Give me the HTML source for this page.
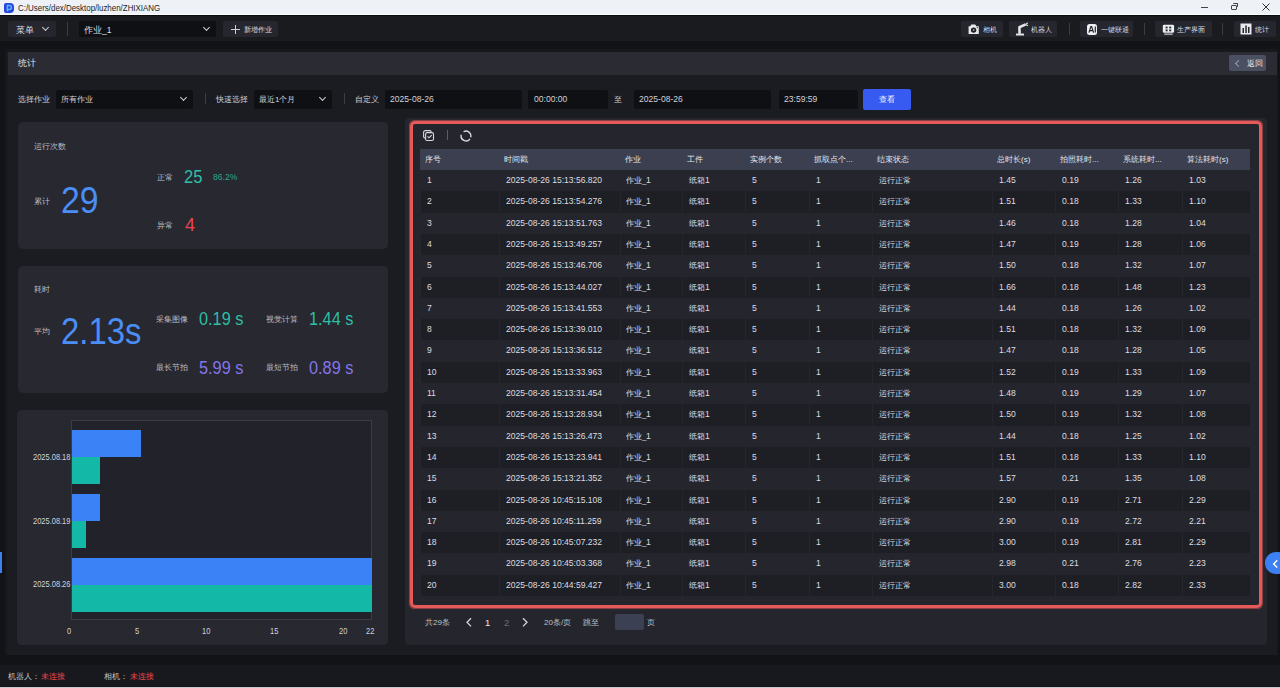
<!DOCTYPE html>
<html><head><meta charset="utf-8">
<style>
*{box-sizing:border-box;margin:0;padding:0}
html,body{width:1280px;height:688px;overflow:hidden;background:#121317;font-family:"Liberation Sans",sans-serif;color:#d9dade}

.a{position:absolute}
.nw{white-space:nowrap}
#title{left:0;top:0;width:1280px;height:15px;background:#eef1f5;border-bottom:1px solid #fafbfc}
#toolbar{left:0;top:15px;width:1280px;height:26px;background:#1a1b1f;border-top:1px solid #0c0c0e}
.tbtn{top:21px;height:16px;background:#25262e;border-radius:2px}
.tbt{font-size:7px;color:#dcdde2;line-height:16px;top:22px;white-space:nowrap}
.vsep{width:1px;background:#3c3d44}
.lbl{font-size:8px;color:#cfd0d5;white-space:nowrap;line-height:10px}
.inp{top:89.5px;height:19px;background:#0f1014;border-radius:2px}
.inpt{top:90px;font-size:8px;color:#d2d3d8;line-height:19px;white-space:nowrap}
.inpn{top:90px;font-size:9.3px;color:#d2d3d8;line-height:19px;white-space:nowrap;transform:scaleX(0.92);transform-origin:0 0}
.card{background:#272830;border-radius:5px}
.big{white-space:nowrap;line-height:1}
.th{background:#3b3f4f}
.tht{font-size:8px;color:#e4e5ea;line-height:21px;white-space:nowrap}
.ro{background:#25262d}
.re{background:#1e1f25}
.tdt{font-size:8px;color:#dddee2;line-height:21.3px;white-space:nowrap}
.dg{font-size:9.3px;display:inline-block;transform:scaleX(0.92);transform-origin:0 0}
.tdn{font-size:9.3px;color:#dddee2;line-height:21.3px;white-space:nowrap;transform:scaleX(0.92);transform-origin:0 0}
.chev{border-right:1.3px solid #cfd0d5;border-bottom:1.3px solid #cfd0d5;transform:rotate(45deg);width:5px;height:5px}
</style></head><body>
<!-- title bar -->
<div id="title" class="a">
  <div class="a" style="left:4px;top:2.5px;width:9.5px;height:10px;background:#2548dc;border-radius:2px 4px 4px 2px"></div>
  <svg class="a" style="left:4px;top:2.5px" width="10" height="10"><path d="M3.4 8.3V2.6h2.1a1.9 1.9 0 0 1 0 3.8H3.4" fill="none" stroke="#63b3f7" stroke-width="1.5"/></svg>
  <div class="a nw" style="left:18px;top:2px;font-size:9.4px;color:#1e1e1e;line-height:11px;transform:scaleX(0.845);transform-origin:0 0">C:/Users/dex/Desktop/luzhen/ZHIXIANG</div>
  <div class="a" style="left:1201px;top:7px;width:7px;height:1px;background:#444"></div>
  <div class="a" style="left:1231px;top:4.5px;width:6px;height:5px;border:1px solid #444;border-radius:1px"></div>
  <div class="a" style="left:1233px;top:3px;width:5px;height:4px;border-top:1px solid #444;border-right:1px solid #444;border-radius:1px"></div>
  <svg class="a" style="left:1261px;top:2px" width="10" height="10"><path d="M1.5 1.5L8.5 8.5M8.5 1.5L1.5 8.5" stroke="#333" stroke-width="1"/></svg>
</div>
<!-- toolbar -->
<div id="toolbar" class="a"></div>
<div class="a tbtn" style="left:8px;width:48px"></div>
<div class="a tbt" style="left:15.5px;font-size:8.5px">菜单</div>
<div class="a chev" style="left:43px;top:25px"></div>
<div class="a vsep" style="left:67px;top:22px;height:14px"></div>
<div class="a tbtn" style="left:79px;width:137px;background:#0f1014"></div>
<div class="a tbt" style="left:84px;font-size:8.5px">作业_1</div>
<div class="a chev" style="left:204px;top:25px"></div>
<div class="a tbtn" style="left:223px;width:55px"></div>
<div class="a" style="left:231px;top:28.5px;width:9px;height:1px;background:#cfd0d5"></div>
<div class="a" style="left:235px;top:24.5px;width:1px;height:9px;background:#cfd0d5"></div>
<div class="a tbt" style="left:244px;font-size:6.5px">新增作业</div>

<div class="a tbtn" style="left:961px;width:42px"></div>
<svg class="a" style="left:968px;top:24px" width="12" height="11"><path d="M0.6 2.2H2.3L3.3 0.4H7.3L8.2 2.2H10.8V9.9H0.6Z" fill="#e8e9ec"/><circle cx="5.6" cy="6.1" r="2.7" fill="#1c1d22"/><circle cx="5.6" cy="6.1" r="1" fill="#9a9ba0"/><circle cx="9.3" cy="3.6" r="0.6" fill="#1c1d22"/></svg>
<div class="a tbt" style="left:983px">相机</div>
<div class="a tbtn" style="left:1009px;width:48px"></div>
<svg class="a" style="left:1015px;top:22px" width="14" height="14"><rect x="1" y="11.6" width="8" height="1.9" rx="0.5" fill="#e3e4e7"/><path d="M4.6 11.8L4.4 5.2L10.6 2.4" fill="none" stroke="#e3e4e7" stroke-width="2.6" stroke-linejoin="round"/><path d="M10.6 2.4l2.2-1.6M10.6 2.4l2.4 1.3" fill="none" stroke="#e3e4e7" stroke-width="1.1"/></svg>
<div class="a tbt" style="left:1031px">机器人</div>
<div class="a vsep" style="left:1069px;top:23px;height:12px"></div>
<div class="a tbtn" style="left:1080px;width:53px"></div>
<div class="a" style="left:1086.5px;top:23.8px;width:10.8px;height:11px;background:#eceef1;border-radius:2.5px"></div><svg class="a" style="left:1086.5px;top:23.8px" width="11" height="11"><path d="M1.9 8.6L3.9 2.6H4.6L6.6 8.6M2.7 6.6H5.8M8.3 2.6V8.6" fill="none" stroke="#202127" stroke-width="1.15"/></svg>
<div class="a tbt" style="left:1101px">一键联通</div>
<div class="a vsep" style="left:1144px;top:23px;height:12px"></div>
<div class="a tbtn" style="left:1155px;width:57px"></div>
<svg class="a" style="left:1162px;top:23.5px" width="13" height="11"><rect x="0.8" y="0.8" width="11.3" height="8" rx="1.3" fill="#eceef1"/><rect x="3.6" y="2.6" width="2" height="1.8" fill="#25262e"/><rect x="7.2" y="2.6" width="2" height="1.8" fill="#25262e"/><rect x="3.6" y="5.5" width="2" height="1.8" fill="#25262e"/><rect x="7.2" y="5.5" width="2" height="1.8" fill="#25262e"/><rect x="2.2" y="9.6" width="8.5" height="1" fill="#eceef1"/></svg>
<div class="a tbt" style="left:1177px">生产界面</div>
<div class="a vsep" style="left:1222px;top:23px;height:12px"></div>
<div class="a tbtn" style="left:1234px;width:42px"></div>
<svg class="a" style="left:1240px;top:23px" width="12" height="12"><rect x="0.5" y="0.5" width="11" height="11" fill="#e8e9ec"/><rect x="2.5" y="5" width="1.5" height="5" fill="#25262e"/><rect x="5.3" y="2.5" width="1.5" height="7.5" fill="#25262e"/><rect x="8" y="4" width="1.5" height="6" fill="#25262e"/></svg>
<div class="a tbt" style="left:1255px">统计</div>

<!-- main container -->
<div class="a" style="left:5px;top:49px;width:1273px;height:606px;background:#17181c"></div>
<div class="a" style="left:7px;top:52px;width:1270px;height:603px;background:#1b1c21"></div>
<div class="a" style="left:8px;top:52px;width:1269px;height:22.5px;background:#2a2b33"></div>
<div class="a nw" style="left:18px;top:53px;font-size:9px;color:#e0e1e5;line-height:21px">统计</div>
<div class="a" style="left:1229px;top:55px;width:37px;height:16px;background:#4a4f61;border-radius:2px"></div>
<div class="a" style="left:1236px;top:61px;width:5px;height:5px;border-left:1.1px solid #9a9eac;border-bottom:1.1px solid #9a9eac;transform:rotate(45deg)"></div>
<div class="a nw" style="left:1247px;top:55.5px;font-size:8px;color:#e8e9ec;line-height:16px">返回</div>

<!-- filter row -->
<div class="a lbl" style="left:18px;top:95px">选择作业</div>
<div class="a inp" style="left:56px;width:137px"></div>
<div class="a inpt" style="left:61px">所有作业</div>
<div class="a chev" style="left:181px;top:95px"></div>
<div class="a vsep" style="left:205px;top:93px;height:11px"></div>
<div class="a lbl" style="left:216px;top:95px">快速选择</div>
<div class="a inp" style="left:254px;width:78px"></div>
<div class="a inpt" style="left:259px">最近1个月</div>
<div class="a chev" style="left:320px;top:95px"></div>
<div class="a vsep" style="left:344px;top:93px;height:11px"></div>
<div class="a lbl" style="left:355px;top:95px">自定义</div>
<div class="a inp" style="left:385px;width:137px"></div>
<div class="a inpn" style="left:390px">2025-08-26</div>
<div class="a inp" style="left:528px;width:80px"></div>
<div class="a inpn" style="left:534px">00:00:00</div>
<div class="a lbl" style="left:614px;top:95px">至</div>
<div class="a inp" style="left:634px;width:137px"></div>
<div class="a inpn" style="left:639px">2025-08-26</div>
<div class="a inp" style="left:779px;width:79px"></div>
<div class="a inpn" style="left:784px">23:59:59</div>
<div class="a" style="left:863px;top:89px;width:48px;height:21px;background:#375af0;border-radius:2px"></div>
<div class="a nw" style="left:879px;top:89px;font-size:8px;color:#fff;line-height:21px">查看</div>

<!-- card 1 -->
<div class="a card" style="left:18px;top:122px;width:370px;height:127px"></div>
<div class="a lbl" style="color:#bdbec4;left:34px;top:142px">运行次数</div>
<div class="a lbl" style="color:#bdbec4;left:34px;top:197px">累计</div>
<div class="a big" style="left:61px;top:182px;font-size:37.5px;color:#4a8ef6;transform:scaleX(0.9);transform-origin:0 0">29</div>
<div class="a lbl" style="color:#bdbec4;left:157px;top:173px">正常</div>
<div class="a big" style="left:184px;top:168px;font-size:18px;color:#2fbfa6;transform:scaleX(0.92);transform-origin:0 0">25</div>
<div class="a big" style="left:212.5px;top:172.5px;font-size:9px;color:#29a890;transform:scaleX(0.95);transform-origin:0 0">86.2%</div>
<div class="a lbl" style="color:#bdbec4;left:157px;top:221px">异常</div>
<div class="a big" style="left:185px;top:215.5px;font-size:18px;color:#e9474d">4</div>

<!-- card 2 -->
<div class="a card" style="left:18px;top:266px;width:370px;height:127px"></div>
<div class="a lbl" style="color:#bdbec4;left:34px;top:285px">耗时</div>
<div class="a lbl" style="color:#bdbec4;left:34px;top:327px">平均</div>
<div class="a big" style="left:61px;top:314px;font-size:36.5px;color:#4a8ef6;transform:scaleX(0.9);transform-origin:0 0">2.13s</div>
<div class="a lbl" style="color:#bdbec4;left:156px;top:315px">采集图像</div>
<div class="a big" style="left:199px;top:310px;font-size:18.5px;transform:scaleX(0.88);transform-origin:0 0;color:#2fbfa6">0.19 s</div>
<div class="a lbl" style="color:#bdbec4;left:266px;top:315px">视觉计算</div>
<div class="a big" style="left:309px;top:310px;font-size:18.5px;transform:scaleX(0.88);transform-origin:0 0;color:#2fbfa6">1.44 s</div>
<div class="a lbl" style="color:#bdbec4;left:156px;top:363px">最长节拍</div>
<div class="a big" style="left:199px;top:358.5px;font-size:18.5px;transform:scaleX(0.88);transform-origin:0 0;color:#8575ea">5.99 s</div>
<div class="a lbl" style="color:#bdbec4;left:266px;top:363px">最短节拍</div>
<div class="a big" style="left:309px;top:358.5px;font-size:18.5px;transform:scaleX(0.88);transform-origin:0 0;color:#8575ea">0.89 s</div>

<!-- card 3 chart -->
<div class="a card" style="left:17px;top:410px;width:371px;height:235px"></div>
<div class="a" style="left:71px;top:420px;width:301px;height:200px;background:#22232a;border:1px solid #3a3d46"></div>
<div class="a" style="left:72px;top:430px;width:69px;height:27.3px;background:#3b82f6"></div>
<div class="a" style="left:72px;top:457.3px;width:28px;height:26.5px;background:#14b8a6"></div>
<div class="a" style="left:72px;top:494px;width:28px;height:26.6px;background:#3b82f6"></div>
<div class="a" style="left:72px;top:520.6px;width:14px;height:27.2px;background:#14b8a6"></div>
<div class="a" style="left:72px;top:557.5px;width:300px;height:27px;background:#3b82f6"></div>
<div class="a" style="left:72px;top:584.5px;width:300px;height:27px;background:#14b8a6"></div>
<div class="a nw" style="left:33px;top:452px;font-size:8.5px;color:#d2d3d8;line-height:10px;transform:scaleX(0.88);transform-origin:0 0">2025.08.18</div>
<div class="a nw" style="left:33px;top:516px;font-size:8.5px;color:#d2d3d8;line-height:10px;transform:scaleX(0.88);transform-origin:0 0">2025.08.19</div>
<div class="a nw" style="left:33px;top:579px;font-size:8.5px;color:#d2d3d8;line-height:10px;transform:scaleX(0.88);transform-origin:0 0">2025.08.26</div>
<div class="a nw" style="left:67px;top:626px;font-size:8.5px;color:#d2d3d8;line-height:10px;transform:scaleX(0.88);transform-origin:0 0">0</div>
<div class="a nw" style="left:135px;top:626px;font-size:8.5px;color:#d2d3d8;line-height:10px;transform:scaleX(0.88);transform-origin:0 0">5</div>
<div class="a nw" style="left:270px;top:626px;font-size:8.5px;color:#d2d3d8;line-height:10px;transform:scaleX(0.88);transform-origin:0 0">15</div>
<div class="a nw" style="left:339px;top:626px;font-size:8.5px;color:#d2d3d8;line-height:10px;transform:scaleX(0.88);transform-origin:0 0">20</div>
<div class="a nw" style="left:366px;top:626px;font-size:8.5px;color:#d2d3d8;line-height:10px;transform:scaleX(0.88);transform-origin:0 0">22</div>
<div class="a nw" style="left:202px;top:626px;font-size:8.5px;color:#d2d3d8;line-height:10px;transform:scaleX(0.88);transform-origin:0 0">10</div>

<!-- table panel -->
<div class="a" style="left:405px;top:118px;width:862px;height:527px;background:#25262d;border-radius:4px"></div>
<div class="a" style="left:410px;top:121px;width:852px;height:487px;border:3px solid #e65a5a;border-radius:5px;box-shadow:0 0 1px 0.5px rgba(229,90,90,.55)"></div>
<svg class="a" style="left:422.5px;top:129.5px" width="12" height="12"><rect x="0.6" y="0.6" width="7.6" height="7.6" rx="1.6" fill="none" stroke="#d8d9de" stroke-width="1.1"/><rect x="2.6" y="2.6" width="7.9" height="7.9" rx="1.6" fill="#25262d" stroke="#d8d9de" stroke-width="1.1"/><path d="M4.5 6.4l1.5 1.4 2.7-2.6" fill="none" stroke="#d8d9de" stroke-width="1.1"/></svg>
<div class="a vsep" style="left:446.5px;top:129.5px;width:1.2px;height:10.5px;background:#5d5e66"></div>
<svg class="a" style="left:460px;top:129.5px" width="13" height="13"><path d="M3.55 1.76A4.9 4.9 0 0 1 10.73 7.27M10.01 8.81A4.9 4.9 0 0 1 1.27 4.73" fill="none" stroke="#d8d9de" stroke-width="1.35"/></svg>
<div class="a th" style="left:420px;top:149.0px;width:830px;height:21.0px"></div>
<div class="a tht" style="left:425px;top:149.0px">序号</div>
<div class="a tht" style="left:504px;top:149.0px">时间戳</div>
<div class="a tht" style="left:625px;top:149.0px">作业</div>
<div class="a tht" style="left:687px;top:149.0px">工件</div>
<div class="a tht" style="left:750px;top:149.0px">实例个数</div>
<div class="a tht" style="left:814px;top:149.0px">抓取点个...</div>
<div class="a tht" style="left:877px;top:149.0px">结束状态</div>
<div class="a tht" style="left:997px;top:149.0px">总时长(s)</div>
<div class="a tht" style="left:1060px;top:149.0px">拍照耗时...</div>
<div class="a tht" style="left:1123px;top:149.0px">系统耗时...</div>
<div class="a tht" style="left:1187px;top:149.0px">算法耗时(s)</div>
<div class="a ro" style="left:421px;top:170.00px;width:78px;height:21.30px"></div>
<div class="a ro" style="left:500px;top:170.00px;width:120px;height:21.30px"></div>
<div class="a ro" style="left:621px;top:170.00px;width:61px;height:21.30px"></div>
<div class="a ro" style="left:683px;top:170.00px;width:62px;height:21.30px"></div>
<div class="a ro" style="left:746px;top:170.00px;width:63px;height:21.30px"></div>
<div class="a ro" style="left:810px;top:170.00px;width:62px;height:21.30px"></div>
<div class="a ro" style="left:873px;top:170.00px;width:119px;height:21.30px"></div>
<div class="a ro" style="left:993px;top:170.00px;width:62px;height:21.30px"></div>
<div class="a ro" style="left:1056px;top:170.00px;width:62px;height:21.30px"></div>
<div class="a ro" style="left:1119px;top:170.00px;width:63px;height:21.30px"></div>
<div class="a ro" style="left:1183px;top:170.00px;width:67px;height:21.30px"></div>
<div class="a tdn" style="left:427px;top:170.00px">1</div>
<div class="a tdn" style="left:506px;top:170.00px">2025-08-26 15:13:56.820</div>
<div class="a tdt" style="left:626px;top:170.00px">作业_<span class=dg>1</span></div>
<div class="a tdt" style="left:689px;top:170.00px">纸箱<span class=dg>1</span></div>
<div class="a tdn" style="left:752px;top:170.00px">5</div>
<div class="a tdn" style="left:816px;top:170.00px">1</div>
<div class="a tdt" style="left:879px;top:170.00px">运行正常</div>
<div class="a tdn" style="left:999px;top:170.00px">1.45</div>
<div class="a tdn" style="left:1062px;top:170.00px">0.19</div>
<div class="a tdn" style="left:1125px;top:170.00px">1.26</div>
<div class="a tdn" style="left:1189px;top:170.00px">1.03</div>
<div class="a re" style="left:421px;top:191.30px;width:78px;height:21.30px"></div>
<div class="a re" style="left:500px;top:191.30px;width:120px;height:21.30px"></div>
<div class="a re" style="left:621px;top:191.30px;width:61px;height:21.30px"></div>
<div class="a re" style="left:683px;top:191.30px;width:62px;height:21.30px"></div>
<div class="a re" style="left:746px;top:191.30px;width:63px;height:21.30px"></div>
<div class="a re" style="left:810px;top:191.30px;width:62px;height:21.30px"></div>
<div class="a re" style="left:873px;top:191.30px;width:119px;height:21.30px"></div>
<div class="a re" style="left:993px;top:191.30px;width:62px;height:21.30px"></div>
<div class="a re" style="left:1056px;top:191.30px;width:62px;height:21.30px"></div>
<div class="a re" style="left:1119px;top:191.30px;width:63px;height:21.30px"></div>
<div class="a re" style="left:1183px;top:191.30px;width:67px;height:21.30px"></div>
<div class="a tdn" style="left:427px;top:191.30px">2</div>
<div class="a tdn" style="left:506px;top:191.30px">2025-08-26 15:13:54.276</div>
<div class="a tdt" style="left:626px;top:191.30px">作业_<span class=dg>1</span></div>
<div class="a tdt" style="left:689px;top:191.30px">纸箱<span class=dg>1</span></div>
<div class="a tdn" style="left:752px;top:191.30px">5</div>
<div class="a tdn" style="left:816px;top:191.30px">1</div>
<div class="a tdt" style="left:879px;top:191.30px">运行正常</div>
<div class="a tdn" style="left:999px;top:191.30px">1.51</div>
<div class="a tdn" style="left:1062px;top:191.30px">0.18</div>
<div class="a tdn" style="left:1125px;top:191.30px">1.33</div>
<div class="a tdn" style="left:1189px;top:191.30px">1.10</div>
<div class="a ro" style="left:421px;top:212.60px;width:78px;height:21.30px"></div>
<div class="a ro" style="left:500px;top:212.60px;width:120px;height:21.30px"></div>
<div class="a ro" style="left:621px;top:212.60px;width:61px;height:21.30px"></div>
<div class="a ro" style="left:683px;top:212.60px;width:62px;height:21.30px"></div>
<div class="a ro" style="left:746px;top:212.60px;width:63px;height:21.30px"></div>
<div class="a ro" style="left:810px;top:212.60px;width:62px;height:21.30px"></div>
<div class="a ro" style="left:873px;top:212.60px;width:119px;height:21.30px"></div>
<div class="a ro" style="left:993px;top:212.60px;width:62px;height:21.30px"></div>
<div class="a ro" style="left:1056px;top:212.60px;width:62px;height:21.30px"></div>
<div class="a ro" style="left:1119px;top:212.60px;width:63px;height:21.30px"></div>
<div class="a ro" style="left:1183px;top:212.60px;width:67px;height:21.30px"></div>
<div class="a tdn" style="left:427px;top:212.60px">3</div>
<div class="a tdn" style="left:506px;top:212.60px">2025-08-26 15:13:51.763</div>
<div class="a tdt" style="left:626px;top:212.60px">作业_<span class=dg>1</span></div>
<div class="a tdt" style="left:689px;top:212.60px">纸箱<span class=dg>1</span></div>
<div class="a tdn" style="left:752px;top:212.60px">5</div>
<div class="a tdn" style="left:816px;top:212.60px">1</div>
<div class="a tdt" style="left:879px;top:212.60px">运行正常</div>
<div class="a tdn" style="left:999px;top:212.60px">1.46</div>
<div class="a tdn" style="left:1062px;top:212.60px">0.18</div>
<div class="a tdn" style="left:1125px;top:212.60px">1.28</div>
<div class="a tdn" style="left:1189px;top:212.60px">1.04</div>
<div class="a re" style="left:421px;top:233.90px;width:78px;height:21.30px"></div>
<div class="a re" style="left:500px;top:233.90px;width:120px;height:21.30px"></div>
<div class="a re" style="left:621px;top:233.90px;width:61px;height:21.30px"></div>
<div class="a re" style="left:683px;top:233.90px;width:62px;height:21.30px"></div>
<div class="a re" style="left:746px;top:233.90px;width:63px;height:21.30px"></div>
<div class="a re" style="left:810px;top:233.90px;width:62px;height:21.30px"></div>
<div class="a re" style="left:873px;top:233.90px;width:119px;height:21.30px"></div>
<div class="a re" style="left:993px;top:233.90px;width:62px;height:21.30px"></div>
<div class="a re" style="left:1056px;top:233.90px;width:62px;height:21.30px"></div>
<div class="a re" style="left:1119px;top:233.90px;width:63px;height:21.30px"></div>
<div class="a re" style="left:1183px;top:233.90px;width:67px;height:21.30px"></div>
<div class="a tdn" style="left:427px;top:233.90px">4</div>
<div class="a tdn" style="left:506px;top:233.90px">2025-08-26 15:13:49.257</div>
<div class="a tdt" style="left:626px;top:233.90px">作业_<span class=dg>1</span></div>
<div class="a tdt" style="left:689px;top:233.90px">纸箱<span class=dg>1</span></div>
<div class="a tdn" style="left:752px;top:233.90px">5</div>
<div class="a tdn" style="left:816px;top:233.90px">1</div>
<div class="a tdt" style="left:879px;top:233.90px">运行正常</div>
<div class="a tdn" style="left:999px;top:233.90px">1.47</div>
<div class="a tdn" style="left:1062px;top:233.90px">0.19</div>
<div class="a tdn" style="left:1125px;top:233.90px">1.28</div>
<div class="a tdn" style="left:1189px;top:233.90px">1.06</div>
<div class="a ro" style="left:421px;top:255.20px;width:78px;height:21.30px"></div>
<div class="a ro" style="left:500px;top:255.20px;width:120px;height:21.30px"></div>
<div class="a ro" style="left:621px;top:255.20px;width:61px;height:21.30px"></div>
<div class="a ro" style="left:683px;top:255.20px;width:62px;height:21.30px"></div>
<div class="a ro" style="left:746px;top:255.20px;width:63px;height:21.30px"></div>
<div class="a ro" style="left:810px;top:255.20px;width:62px;height:21.30px"></div>
<div class="a ro" style="left:873px;top:255.20px;width:119px;height:21.30px"></div>
<div class="a ro" style="left:993px;top:255.20px;width:62px;height:21.30px"></div>
<div class="a ro" style="left:1056px;top:255.20px;width:62px;height:21.30px"></div>
<div class="a ro" style="left:1119px;top:255.20px;width:63px;height:21.30px"></div>
<div class="a ro" style="left:1183px;top:255.20px;width:67px;height:21.30px"></div>
<div class="a tdn" style="left:427px;top:255.20px">5</div>
<div class="a tdn" style="left:506px;top:255.20px">2025-08-26 15:13:46.706</div>
<div class="a tdt" style="left:626px;top:255.20px">作业_<span class=dg>1</span></div>
<div class="a tdt" style="left:689px;top:255.20px">纸箱<span class=dg>1</span></div>
<div class="a tdn" style="left:752px;top:255.20px">5</div>
<div class="a tdn" style="left:816px;top:255.20px">1</div>
<div class="a tdt" style="left:879px;top:255.20px">运行正常</div>
<div class="a tdn" style="left:999px;top:255.20px">1.50</div>
<div class="a tdn" style="left:1062px;top:255.20px">0.18</div>
<div class="a tdn" style="left:1125px;top:255.20px">1.32</div>
<div class="a tdn" style="left:1189px;top:255.20px">1.07</div>
<div class="a re" style="left:421px;top:276.50px;width:78px;height:21.30px"></div>
<div class="a re" style="left:500px;top:276.50px;width:120px;height:21.30px"></div>
<div class="a re" style="left:621px;top:276.50px;width:61px;height:21.30px"></div>
<div class="a re" style="left:683px;top:276.50px;width:62px;height:21.30px"></div>
<div class="a re" style="left:746px;top:276.50px;width:63px;height:21.30px"></div>
<div class="a re" style="left:810px;top:276.50px;width:62px;height:21.30px"></div>
<div class="a re" style="left:873px;top:276.50px;width:119px;height:21.30px"></div>
<div class="a re" style="left:993px;top:276.50px;width:62px;height:21.30px"></div>
<div class="a re" style="left:1056px;top:276.50px;width:62px;height:21.30px"></div>
<div class="a re" style="left:1119px;top:276.50px;width:63px;height:21.30px"></div>
<div class="a re" style="left:1183px;top:276.50px;width:67px;height:21.30px"></div>
<div class="a tdn" style="left:427px;top:276.50px">6</div>
<div class="a tdn" style="left:506px;top:276.50px">2025-08-26 15:13:44.027</div>
<div class="a tdt" style="left:626px;top:276.50px">作业_<span class=dg>1</span></div>
<div class="a tdt" style="left:689px;top:276.50px">纸箱<span class=dg>1</span></div>
<div class="a tdn" style="left:752px;top:276.50px">5</div>
<div class="a tdn" style="left:816px;top:276.50px">1</div>
<div class="a tdt" style="left:879px;top:276.50px">运行正常</div>
<div class="a tdn" style="left:999px;top:276.50px">1.66</div>
<div class="a tdn" style="left:1062px;top:276.50px">0.18</div>
<div class="a tdn" style="left:1125px;top:276.50px">1.48</div>
<div class="a tdn" style="left:1189px;top:276.50px">1.23</div>
<div class="a ro" style="left:421px;top:297.80px;width:78px;height:21.30px"></div>
<div class="a ro" style="left:500px;top:297.80px;width:120px;height:21.30px"></div>
<div class="a ro" style="left:621px;top:297.80px;width:61px;height:21.30px"></div>
<div class="a ro" style="left:683px;top:297.80px;width:62px;height:21.30px"></div>
<div class="a ro" style="left:746px;top:297.80px;width:63px;height:21.30px"></div>
<div class="a ro" style="left:810px;top:297.80px;width:62px;height:21.30px"></div>
<div class="a ro" style="left:873px;top:297.80px;width:119px;height:21.30px"></div>
<div class="a ro" style="left:993px;top:297.80px;width:62px;height:21.30px"></div>
<div class="a ro" style="left:1056px;top:297.80px;width:62px;height:21.30px"></div>
<div class="a ro" style="left:1119px;top:297.80px;width:63px;height:21.30px"></div>
<div class="a ro" style="left:1183px;top:297.80px;width:67px;height:21.30px"></div>
<div class="a tdn" style="left:427px;top:297.80px">7</div>
<div class="a tdn" style="left:506px;top:297.80px">2025-08-26 15:13:41.553</div>
<div class="a tdt" style="left:626px;top:297.80px">作业_<span class=dg>1</span></div>
<div class="a tdt" style="left:689px;top:297.80px">纸箱<span class=dg>1</span></div>
<div class="a tdn" style="left:752px;top:297.80px">5</div>
<div class="a tdn" style="left:816px;top:297.80px">1</div>
<div class="a tdt" style="left:879px;top:297.80px">运行正常</div>
<div class="a tdn" style="left:999px;top:297.80px">1.44</div>
<div class="a tdn" style="left:1062px;top:297.80px">0.18</div>
<div class="a tdn" style="left:1125px;top:297.80px">1.26</div>
<div class="a tdn" style="left:1189px;top:297.80px">1.02</div>
<div class="a re" style="left:421px;top:319.10px;width:78px;height:21.30px"></div>
<div class="a re" style="left:500px;top:319.10px;width:120px;height:21.30px"></div>
<div class="a re" style="left:621px;top:319.10px;width:61px;height:21.30px"></div>
<div class="a re" style="left:683px;top:319.10px;width:62px;height:21.30px"></div>
<div class="a re" style="left:746px;top:319.10px;width:63px;height:21.30px"></div>
<div class="a re" style="left:810px;top:319.10px;width:62px;height:21.30px"></div>
<div class="a re" style="left:873px;top:319.10px;width:119px;height:21.30px"></div>
<div class="a re" style="left:993px;top:319.10px;width:62px;height:21.30px"></div>
<div class="a re" style="left:1056px;top:319.10px;width:62px;height:21.30px"></div>
<div class="a re" style="left:1119px;top:319.10px;width:63px;height:21.30px"></div>
<div class="a re" style="left:1183px;top:319.10px;width:67px;height:21.30px"></div>
<div class="a tdn" style="left:427px;top:319.10px">8</div>
<div class="a tdn" style="left:506px;top:319.10px">2025-08-26 15:13:39.010</div>
<div class="a tdt" style="left:626px;top:319.10px">作业_<span class=dg>1</span></div>
<div class="a tdt" style="left:689px;top:319.10px">纸箱<span class=dg>1</span></div>
<div class="a tdn" style="left:752px;top:319.10px">5</div>
<div class="a tdn" style="left:816px;top:319.10px">1</div>
<div class="a tdt" style="left:879px;top:319.10px">运行正常</div>
<div class="a tdn" style="left:999px;top:319.10px">1.51</div>
<div class="a tdn" style="left:1062px;top:319.10px">0.18</div>
<div class="a tdn" style="left:1125px;top:319.10px">1.32</div>
<div class="a tdn" style="left:1189px;top:319.10px">1.09</div>
<div class="a ro" style="left:421px;top:340.40px;width:78px;height:21.30px"></div>
<div class="a ro" style="left:500px;top:340.40px;width:120px;height:21.30px"></div>
<div class="a ro" style="left:621px;top:340.40px;width:61px;height:21.30px"></div>
<div class="a ro" style="left:683px;top:340.40px;width:62px;height:21.30px"></div>
<div class="a ro" style="left:746px;top:340.40px;width:63px;height:21.30px"></div>
<div class="a ro" style="left:810px;top:340.40px;width:62px;height:21.30px"></div>
<div class="a ro" style="left:873px;top:340.40px;width:119px;height:21.30px"></div>
<div class="a ro" style="left:993px;top:340.40px;width:62px;height:21.30px"></div>
<div class="a ro" style="left:1056px;top:340.40px;width:62px;height:21.30px"></div>
<div class="a ro" style="left:1119px;top:340.40px;width:63px;height:21.30px"></div>
<div class="a ro" style="left:1183px;top:340.40px;width:67px;height:21.30px"></div>
<div class="a tdn" style="left:427px;top:340.40px">9</div>
<div class="a tdn" style="left:506px;top:340.40px">2025-08-26 15:13:36.512</div>
<div class="a tdt" style="left:626px;top:340.40px">作业_<span class=dg>1</span></div>
<div class="a tdt" style="left:689px;top:340.40px">纸箱<span class=dg>1</span></div>
<div class="a tdn" style="left:752px;top:340.40px">5</div>
<div class="a tdn" style="left:816px;top:340.40px">1</div>
<div class="a tdt" style="left:879px;top:340.40px">运行正常</div>
<div class="a tdn" style="left:999px;top:340.40px">1.47</div>
<div class="a tdn" style="left:1062px;top:340.40px">0.18</div>
<div class="a tdn" style="left:1125px;top:340.40px">1.28</div>
<div class="a tdn" style="left:1189px;top:340.40px">1.05</div>
<div class="a re" style="left:421px;top:361.70px;width:78px;height:21.30px"></div>
<div class="a re" style="left:500px;top:361.70px;width:120px;height:21.30px"></div>
<div class="a re" style="left:621px;top:361.70px;width:61px;height:21.30px"></div>
<div class="a re" style="left:683px;top:361.70px;width:62px;height:21.30px"></div>
<div class="a re" style="left:746px;top:361.70px;width:63px;height:21.30px"></div>
<div class="a re" style="left:810px;top:361.70px;width:62px;height:21.30px"></div>
<div class="a re" style="left:873px;top:361.70px;width:119px;height:21.30px"></div>
<div class="a re" style="left:993px;top:361.70px;width:62px;height:21.30px"></div>
<div class="a re" style="left:1056px;top:361.70px;width:62px;height:21.30px"></div>
<div class="a re" style="left:1119px;top:361.70px;width:63px;height:21.30px"></div>
<div class="a re" style="left:1183px;top:361.70px;width:67px;height:21.30px"></div>
<div class="a tdn" style="left:427px;top:361.70px">10</div>
<div class="a tdn" style="left:506px;top:361.70px">2025-08-26 15:13:33.963</div>
<div class="a tdt" style="left:626px;top:361.70px">作业_<span class=dg>1</span></div>
<div class="a tdt" style="left:689px;top:361.70px">纸箱<span class=dg>1</span></div>
<div class="a tdn" style="left:752px;top:361.70px">5</div>
<div class="a tdn" style="left:816px;top:361.70px">1</div>
<div class="a tdt" style="left:879px;top:361.70px">运行正常</div>
<div class="a tdn" style="left:999px;top:361.70px">1.52</div>
<div class="a tdn" style="left:1062px;top:361.70px">0.19</div>
<div class="a tdn" style="left:1125px;top:361.70px">1.33</div>
<div class="a tdn" style="left:1189px;top:361.70px">1.09</div>
<div class="a ro" style="left:421px;top:383.00px;width:78px;height:21.30px"></div>
<div class="a ro" style="left:500px;top:383.00px;width:120px;height:21.30px"></div>
<div class="a ro" style="left:621px;top:383.00px;width:61px;height:21.30px"></div>
<div class="a ro" style="left:683px;top:383.00px;width:62px;height:21.30px"></div>
<div class="a ro" style="left:746px;top:383.00px;width:63px;height:21.30px"></div>
<div class="a ro" style="left:810px;top:383.00px;width:62px;height:21.30px"></div>
<div class="a ro" style="left:873px;top:383.00px;width:119px;height:21.30px"></div>
<div class="a ro" style="left:993px;top:383.00px;width:62px;height:21.30px"></div>
<div class="a ro" style="left:1056px;top:383.00px;width:62px;height:21.30px"></div>
<div class="a ro" style="left:1119px;top:383.00px;width:63px;height:21.30px"></div>
<div class="a ro" style="left:1183px;top:383.00px;width:67px;height:21.30px"></div>
<div class="a tdn" style="left:427px;top:383.00px">11</div>
<div class="a tdn" style="left:506px;top:383.00px">2025-08-26 15:13:31.454</div>
<div class="a tdt" style="left:626px;top:383.00px">作业_<span class=dg>1</span></div>
<div class="a tdt" style="left:689px;top:383.00px">纸箱<span class=dg>1</span></div>
<div class="a tdn" style="left:752px;top:383.00px">5</div>
<div class="a tdn" style="left:816px;top:383.00px">1</div>
<div class="a tdt" style="left:879px;top:383.00px">运行正常</div>
<div class="a tdn" style="left:999px;top:383.00px">1.48</div>
<div class="a tdn" style="left:1062px;top:383.00px">0.19</div>
<div class="a tdn" style="left:1125px;top:383.00px">1.29</div>
<div class="a tdn" style="left:1189px;top:383.00px">1.07</div>
<div class="a re" style="left:421px;top:404.30px;width:78px;height:21.30px"></div>
<div class="a re" style="left:500px;top:404.30px;width:120px;height:21.30px"></div>
<div class="a re" style="left:621px;top:404.30px;width:61px;height:21.30px"></div>
<div class="a re" style="left:683px;top:404.30px;width:62px;height:21.30px"></div>
<div class="a re" style="left:746px;top:404.30px;width:63px;height:21.30px"></div>
<div class="a re" style="left:810px;top:404.30px;width:62px;height:21.30px"></div>
<div class="a re" style="left:873px;top:404.30px;width:119px;height:21.30px"></div>
<div class="a re" style="left:993px;top:404.30px;width:62px;height:21.30px"></div>
<div class="a re" style="left:1056px;top:404.30px;width:62px;height:21.30px"></div>
<div class="a re" style="left:1119px;top:404.30px;width:63px;height:21.30px"></div>
<div class="a re" style="left:1183px;top:404.30px;width:67px;height:21.30px"></div>
<div class="a tdn" style="left:427px;top:404.30px">12</div>
<div class="a tdn" style="left:506px;top:404.30px">2025-08-26 15:13:28.934</div>
<div class="a tdt" style="left:626px;top:404.30px">作业_<span class=dg>1</span></div>
<div class="a tdt" style="left:689px;top:404.30px">纸箱<span class=dg>1</span></div>
<div class="a tdn" style="left:752px;top:404.30px">5</div>
<div class="a tdn" style="left:816px;top:404.30px">1</div>
<div class="a tdt" style="left:879px;top:404.30px">运行正常</div>
<div class="a tdn" style="left:999px;top:404.30px">1.50</div>
<div class="a tdn" style="left:1062px;top:404.30px">0.19</div>
<div class="a tdn" style="left:1125px;top:404.30px">1.32</div>
<div class="a tdn" style="left:1189px;top:404.30px">1.08</div>
<div class="a ro" style="left:421px;top:425.60px;width:78px;height:21.30px"></div>
<div class="a ro" style="left:500px;top:425.60px;width:120px;height:21.30px"></div>
<div class="a ro" style="left:621px;top:425.60px;width:61px;height:21.30px"></div>
<div class="a ro" style="left:683px;top:425.60px;width:62px;height:21.30px"></div>
<div class="a ro" style="left:746px;top:425.60px;width:63px;height:21.30px"></div>
<div class="a ro" style="left:810px;top:425.60px;width:62px;height:21.30px"></div>
<div class="a ro" style="left:873px;top:425.60px;width:119px;height:21.30px"></div>
<div class="a ro" style="left:993px;top:425.60px;width:62px;height:21.30px"></div>
<div class="a ro" style="left:1056px;top:425.60px;width:62px;height:21.30px"></div>
<div class="a ro" style="left:1119px;top:425.60px;width:63px;height:21.30px"></div>
<div class="a ro" style="left:1183px;top:425.60px;width:67px;height:21.30px"></div>
<div class="a tdn" style="left:427px;top:425.60px">13</div>
<div class="a tdn" style="left:506px;top:425.60px">2025-08-26 15:13:26.473</div>
<div class="a tdt" style="left:626px;top:425.60px">作业_<span class=dg>1</span></div>
<div class="a tdt" style="left:689px;top:425.60px">纸箱<span class=dg>1</span></div>
<div class="a tdn" style="left:752px;top:425.60px">5</div>
<div class="a tdn" style="left:816px;top:425.60px">1</div>
<div class="a tdt" style="left:879px;top:425.60px">运行正常</div>
<div class="a tdn" style="left:999px;top:425.60px">1.44</div>
<div class="a tdn" style="left:1062px;top:425.60px">0.18</div>
<div class="a tdn" style="left:1125px;top:425.60px">1.25</div>
<div class="a tdn" style="left:1189px;top:425.60px">1.02</div>
<div class="a re" style="left:421px;top:446.90px;width:78px;height:21.30px"></div>
<div class="a re" style="left:500px;top:446.90px;width:120px;height:21.30px"></div>
<div class="a re" style="left:621px;top:446.90px;width:61px;height:21.30px"></div>
<div class="a re" style="left:683px;top:446.90px;width:62px;height:21.30px"></div>
<div class="a re" style="left:746px;top:446.90px;width:63px;height:21.30px"></div>
<div class="a re" style="left:810px;top:446.90px;width:62px;height:21.30px"></div>
<div class="a re" style="left:873px;top:446.90px;width:119px;height:21.30px"></div>
<div class="a re" style="left:993px;top:446.90px;width:62px;height:21.30px"></div>
<div class="a re" style="left:1056px;top:446.90px;width:62px;height:21.30px"></div>
<div class="a re" style="left:1119px;top:446.90px;width:63px;height:21.30px"></div>
<div class="a re" style="left:1183px;top:446.90px;width:67px;height:21.30px"></div>
<div class="a tdn" style="left:427px;top:446.90px">14</div>
<div class="a tdn" style="left:506px;top:446.90px">2025-08-26 15:13:23.941</div>
<div class="a tdt" style="left:626px;top:446.90px">作业_<span class=dg>1</span></div>
<div class="a tdt" style="left:689px;top:446.90px">纸箱<span class=dg>1</span></div>
<div class="a tdn" style="left:752px;top:446.90px">5</div>
<div class="a tdn" style="left:816px;top:446.90px">1</div>
<div class="a tdt" style="left:879px;top:446.90px">运行正常</div>
<div class="a tdn" style="left:999px;top:446.90px">1.51</div>
<div class="a tdn" style="left:1062px;top:446.90px">0.18</div>
<div class="a tdn" style="left:1125px;top:446.90px">1.33</div>
<div class="a tdn" style="left:1189px;top:446.90px">1.10</div>
<div class="a ro" style="left:421px;top:468.20px;width:78px;height:21.30px"></div>
<div class="a ro" style="left:500px;top:468.20px;width:120px;height:21.30px"></div>
<div class="a ro" style="left:621px;top:468.20px;width:61px;height:21.30px"></div>
<div class="a ro" style="left:683px;top:468.20px;width:62px;height:21.30px"></div>
<div class="a ro" style="left:746px;top:468.20px;width:63px;height:21.30px"></div>
<div class="a ro" style="left:810px;top:468.20px;width:62px;height:21.30px"></div>
<div class="a ro" style="left:873px;top:468.20px;width:119px;height:21.30px"></div>
<div class="a ro" style="left:993px;top:468.20px;width:62px;height:21.30px"></div>
<div class="a ro" style="left:1056px;top:468.20px;width:62px;height:21.30px"></div>
<div class="a ro" style="left:1119px;top:468.20px;width:63px;height:21.30px"></div>
<div class="a ro" style="left:1183px;top:468.20px;width:67px;height:21.30px"></div>
<div class="a tdn" style="left:427px;top:468.20px">15</div>
<div class="a tdn" style="left:506px;top:468.20px">2025-08-26 15:13:21.352</div>
<div class="a tdt" style="left:626px;top:468.20px">作业_<span class=dg>1</span></div>
<div class="a tdt" style="left:689px;top:468.20px">纸箱<span class=dg>1</span></div>
<div class="a tdn" style="left:752px;top:468.20px">5</div>
<div class="a tdn" style="left:816px;top:468.20px">1</div>
<div class="a tdt" style="left:879px;top:468.20px">运行正常</div>
<div class="a tdn" style="left:999px;top:468.20px">1.57</div>
<div class="a tdn" style="left:1062px;top:468.20px">0.21</div>
<div class="a tdn" style="left:1125px;top:468.20px">1.35</div>
<div class="a tdn" style="left:1189px;top:468.20px">1.08</div>
<div class="a re" style="left:421px;top:489.50px;width:78px;height:21.30px"></div>
<div class="a re" style="left:500px;top:489.50px;width:120px;height:21.30px"></div>
<div class="a re" style="left:621px;top:489.50px;width:61px;height:21.30px"></div>
<div class="a re" style="left:683px;top:489.50px;width:62px;height:21.30px"></div>
<div class="a re" style="left:746px;top:489.50px;width:63px;height:21.30px"></div>
<div class="a re" style="left:810px;top:489.50px;width:62px;height:21.30px"></div>
<div class="a re" style="left:873px;top:489.50px;width:119px;height:21.30px"></div>
<div class="a re" style="left:993px;top:489.50px;width:62px;height:21.30px"></div>
<div class="a re" style="left:1056px;top:489.50px;width:62px;height:21.30px"></div>
<div class="a re" style="left:1119px;top:489.50px;width:63px;height:21.30px"></div>
<div class="a re" style="left:1183px;top:489.50px;width:67px;height:21.30px"></div>
<div class="a tdn" style="left:427px;top:489.50px">16</div>
<div class="a tdn" style="left:506px;top:489.50px">2025-08-26 10:45:15.108</div>
<div class="a tdt" style="left:626px;top:489.50px">作业_<span class=dg>1</span></div>
<div class="a tdt" style="left:689px;top:489.50px">纸箱<span class=dg>1</span></div>
<div class="a tdn" style="left:752px;top:489.50px">5</div>
<div class="a tdn" style="left:816px;top:489.50px">1</div>
<div class="a tdt" style="left:879px;top:489.50px">运行正常</div>
<div class="a tdn" style="left:999px;top:489.50px">2.90</div>
<div class="a tdn" style="left:1062px;top:489.50px">0.19</div>
<div class="a tdn" style="left:1125px;top:489.50px">2.71</div>
<div class="a tdn" style="left:1189px;top:489.50px">2.29</div>
<div class="a ro" style="left:421px;top:510.80px;width:78px;height:21.30px"></div>
<div class="a ro" style="left:500px;top:510.80px;width:120px;height:21.30px"></div>
<div class="a ro" style="left:621px;top:510.80px;width:61px;height:21.30px"></div>
<div class="a ro" style="left:683px;top:510.80px;width:62px;height:21.30px"></div>
<div class="a ro" style="left:746px;top:510.80px;width:63px;height:21.30px"></div>
<div class="a ro" style="left:810px;top:510.80px;width:62px;height:21.30px"></div>
<div class="a ro" style="left:873px;top:510.80px;width:119px;height:21.30px"></div>
<div class="a ro" style="left:993px;top:510.80px;width:62px;height:21.30px"></div>
<div class="a ro" style="left:1056px;top:510.80px;width:62px;height:21.30px"></div>
<div class="a ro" style="left:1119px;top:510.80px;width:63px;height:21.30px"></div>
<div class="a ro" style="left:1183px;top:510.80px;width:67px;height:21.30px"></div>
<div class="a tdn" style="left:427px;top:510.80px">17</div>
<div class="a tdn" style="left:506px;top:510.80px">2025-08-26 10:45:11.259</div>
<div class="a tdt" style="left:626px;top:510.80px">作业_<span class=dg>1</span></div>
<div class="a tdt" style="left:689px;top:510.80px">纸箱<span class=dg>1</span></div>
<div class="a tdn" style="left:752px;top:510.80px">5</div>
<div class="a tdn" style="left:816px;top:510.80px">1</div>
<div class="a tdt" style="left:879px;top:510.80px">运行正常</div>
<div class="a tdn" style="left:999px;top:510.80px">2.90</div>
<div class="a tdn" style="left:1062px;top:510.80px">0.19</div>
<div class="a tdn" style="left:1125px;top:510.80px">2.72</div>
<div class="a tdn" style="left:1189px;top:510.80px">2.21</div>
<div class="a re" style="left:421px;top:532.10px;width:78px;height:21.30px"></div>
<div class="a re" style="left:500px;top:532.10px;width:120px;height:21.30px"></div>
<div class="a re" style="left:621px;top:532.10px;width:61px;height:21.30px"></div>
<div class="a re" style="left:683px;top:532.10px;width:62px;height:21.30px"></div>
<div class="a re" style="left:746px;top:532.10px;width:63px;height:21.30px"></div>
<div class="a re" style="left:810px;top:532.10px;width:62px;height:21.30px"></div>
<div class="a re" style="left:873px;top:532.10px;width:119px;height:21.30px"></div>
<div class="a re" style="left:993px;top:532.10px;width:62px;height:21.30px"></div>
<div class="a re" style="left:1056px;top:532.10px;width:62px;height:21.30px"></div>
<div class="a re" style="left:1119px;top:532.10px;width:63px;height:21.30px"></div>
<div class="a re" style="left:1183px;top:532.10px;width:67px;height:21.30px"></div>
<div class="a tdn" style="left:427px;top:532.10px">18</div>
<div class="a tdn" style="left:506px;top:532.10px">2025-08-26 10:45:07.232</div>
<div class="a tdt" style="left:626px;top:532.10px">作业_<span class=dg>1</span></div>
<div class="a tdt" style="left:689px;top:532.10px">纸箱<span class=dg>1</span></div>
<div class="a tdn" style="left:752px;top:532.10px">5</div>
<div class="a tdn" style="left:816px;top:532.10px">1</div>
<div class="a tdt" style="left:879px;top:532.10px">运行正常</div>
<div class="a tdn" style="left:999px;top:532.10px">3.00</div>
<div class="a tdn" style="left:1062px;top:532.10px">0.19</div>
<div class="a tdn" style="left:1125px;top:532.10px">2.81</div>
<div class="a tdn" style="left:1189px;top:532.10px">2.29</div>
<div class="a ro" style="left:421px;top:553.40px;width:78px;height:21.30px"></div>
<div class="a ro" style="left:500px;top:553.40px;width:120px;height:21.30px"></div>
<div class="a ro" style="left:621px;top:553.40px;width:61px;height:21.30px"></div>
<div class="a ro" style="left:683px;top:553.40px;width:62px;height:21.30px"></div>
<div class="a ro" style="left:746px;top:553.40px;width:63px;height:21.30px"></div>
<div class="a ro" style="left:810px;top:553.40px;width:62px;height:21.30px"></div>
<div class="a ro" style="left:873px;top:553.40px;width:119px;height:21.30px"></div>
<div class="a ro" style="left:993px;top:553.40px;width:62px;height:21.30px"></div>
<div class="a ro" style="left:1056px;top:553.40px;width:62px;height:21.30px"></div>
<div class="a ro" style="left:1119px;top:553.40px;width:63px;height:21.30px"></div>
<div class="a ro" style="left:1183px;top:553.40px;width:67px;height:21.30px"></div>
<div class="a tdn" style="left:427px;top:553.40px">19</div>
<div class="a tdn" style="left:506px;top:553.40px">2025-08-26 10:45:03.368</div>
<div class="a tdt" style="left:626px;top:553.40px">作业_<span class=dg>1</span></div>
<div class="a tdt" style="left:689px;top:553.40px">纸箱<span class=dg>1</span></div>
<div class="a tdn" style="left:752px;top:553.40px">5</div>
<div class="a tdn" style="left:816px;top:553.40px">1</div>
<div class="a tdt" style="left:879px;top:553.40px">运行正常</div>
<div class="a tdn" style="left:999px;top:553.40px">2.98</div>
<div class="a tdn" style="left:1062px;top:553.40px">0.21</div>
<div class="a tdn" style="left:1125px;top:553.40px">2.76</div>
<div class="a tdn" style="left:1189px;top:553.40px">2.23</div>
<div class="a re" style="left:421px;top:574.70px;width:78px;height:21.30px"></div>
<div class="a re" style="left:500px;top:574.70px;width:120px;height:21.30px"></div>
<div class="a re" style="left:621px;top:574.70px;width:61px;height:21.30px"></div>
<div class="a re" style="left:683px;top:574.70px;width:62px;height:21.30px"></div>
<div class="a re" style="left:746px;top:574.70px;width:63px;height:21.30px"></div>
<div class="a re" style="left:810px;top:574.70px;width:62px;height:21.30px"></div>
<div class="a re" style="left:873px;top:574.70px;width:119px;height:21.30px"></div>
<div class="a re" style="left:993px;top:574.70px;width:62px;height:21.30px"></div>
<div class="a re" style="left:1056px;top:574.70px;width:62px;height:21.30px"></div>
<div class="a re" style="left:1119px;top:574.70px;width:63px;height:21.30px"></div>
<div class="a re" style="left:1183px;top:574.70px;width:67px;height:21.30px"></div>
<div class="a tdn" style="left:427px;top:574.70px">20</div>
<div class="a tdn" style="left:506px;top:574.70px">2025-08-26 10:44:59.427</div>
<div class="a tdt" style="left:626px;top:574.70px">作业_<span class=dg>1</span></div>
<div class="a tdt" style="left:689px;top:574.70px">纸箱<span class=dg>1</span></div>
<div class="a tdn" style="left:752px;top:574.70px">5</div>
<div class="a tdn" style="left:816px;top:574.70px">1</div>
<div class="a tdt" style="left:879px;top:574.70px">运行正常</div>
<div class="a tdn" style="left:999px;top:574.70px">3.00</div>
<div class="a tdn" style="left:1062px;top:574.70px">0.18</div>
<div class="a tdn" style="left:1125px;top:574.70px">2.82</div>
<div class="a tdn" style="left:1189px;top:574.70px">2.33</div>

<!-- pagination -->
<div class="a nw" style="left:425px;top:618px;font-size:8px;color:#bfc0c5;line-height:10px">共29条</div>
<svg class="a" style="left:465px;top:617px" width="8" height="11"><path d="M6 1.2L2 5.3l4 4.1" fill="none" stroke="#d6d7dc" stroke-width="1.3"/></svg>
<div class="a nw" style="left:485px;top:617px;font-size:9.5px;color:#e8e9ec;line-height:12px">1</div>
<div class="a nw" style="left:504px;top:617px;font-size:9.5px;color:#6c6e78;line-height:12px">2</div>
<svg class="a" style="left:521px;top:617px" width="8" height="11"><path d="M2 1.2L6 5.3l-4 4.1" fill="none" stroke="#d6d7dc" stroke-width="1.3"/></svg>
<div class="a nw" style="left:544px;top:618px;font-size:8px;color:#bfc0c5;line-height:10px">20条/页</div>
<div class="a nw" style="left:583px;top:618px;font-size:8px;color:#bfc0c5;line-height:10px">跳至</div>
<div class="a" style="left:615px;top:614px;width:29px;height:16px;background:#3c4053;border-radius:2px"></div>
<div class="a nw" style="left:647px;top:618px;font-size:8px;color:#bfc0c5;line-height:10px">页</div>

<!-- side markers -->
<div class="a" style="left:0px;top:552px;width:2px;height:21px;background:#3b7ff2"></div>
<div class="a" style="left:1265px;top:552px;width:24px;height:22px;background:#3d80f4;border-radius:11px"></div>
<svg class="a" style="left:1271px;top:559px" width="9" height="10"><path d="M6.3 1.2L2.6 4.9l3.7 3.7" fill="none" stroke="#fff" stroke-width="1.4"/></svg>

<!-- status bar -->
<div class="a" style="left:0;top:665px;width:1280px;height:21px;background:#18191e"></div>
<div class="a" style="left:0;top:687px;width:1280px;height:1px;background:#c9cacd"></div>
<div class="a nw" style="left:8px;top:672px;font-size:8px;color:#c0c1c6;line-height:10px">机器人：</div>
<div class="a nw" style="left:41px;top:672px;font-size:8px;color:#f0474c;line-height:10px">未连接</div>
<div class="a nw" style="left:104px;top:672px;font-size:8px;color:#c0c1c6;line-height:10px">相机：</div>
<div class="a nw" style="left:130px;top:672px;font-size:8px;color:#f0474c;line-height:10px">未连接</div>
</body></html>
